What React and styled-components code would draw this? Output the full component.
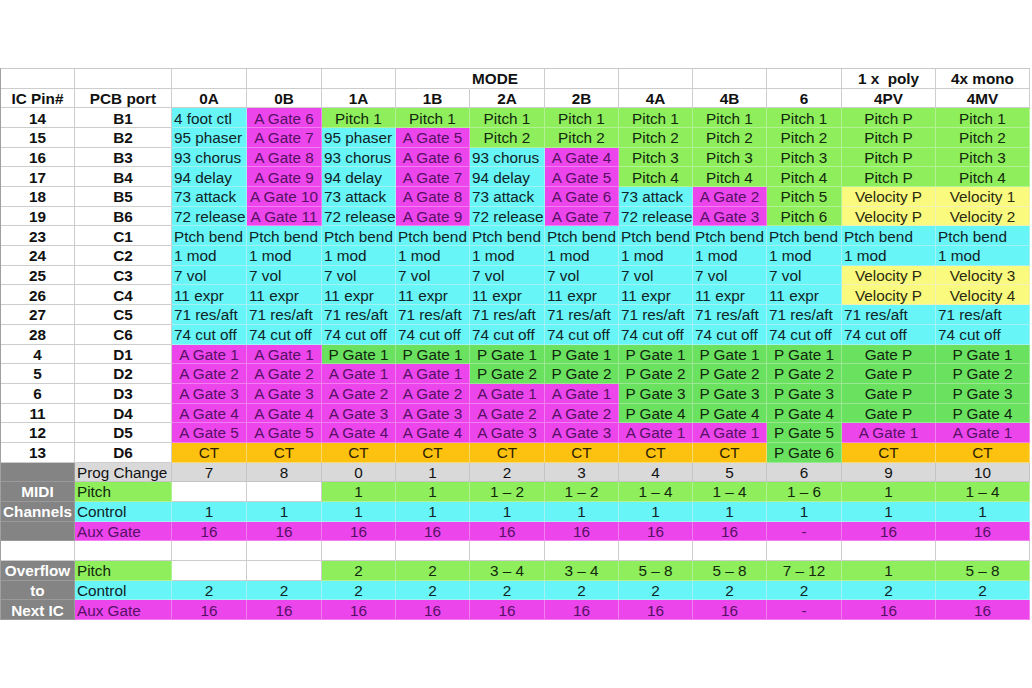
import React from 'react';
import styled, { createGlobalStyle } from 'styled-components';

const GlobalStyle = createGlobalStyle`
  html, body { margin: 0; padding: 0; background: #ffffff; }
  body { font-family: "Liberation Sans", Arial, sans-serif; }
`;

const TONES = {
  w: { bg: '#ffffff', fg: '#111111', line: '#cdcdcd' },
  c: { bg: '#68f5f7', fg: '#0e2426', line: '#a2f1f3' },
  m: { bg: '#ec45ec', fg: '#561064', line: '#f27ef2' },
  g: { bg: '#8eee5c', fg: '#12280c', line: '#b2f194' },
  p: { bg: '#6be160', fg: '#0f260c', line: '#9ae892' },
  y: { bg: '#fafa7e', fg: '#2a2a10', line: '#f3f0b4' },
  o: { bg: '#fdc10f', fg: '#2a2000', line: '#f8d870' },
  l: { bg: '#d9d9d9', fg: '#111111', line: '#c4c4c4' },
  d: { bg: '#848484', fg: '#ffffff', line: '#9a9a9a' },
};

const Page = styled.div`
  display: flex;
  align-items: center;
  justify-content: flex-start;
  height: 688px;
  width: 1032px;
`;

const Sheet = styled.div`
  display: grid;
  grid-template-columns: 74px 97px 75px 75px 74px 74px 75px 74px 74px 74px 75px 94px 94px;
  grid-template-rows: repeat(28, 1fr);
  height: 552px;
  box-sizing: border-box;
  border-top: 1px solid #c8c8c8;
  border-left: 1px solid #a0a0a0;
`;

const Cell = styled.div`
  display: flex;
  align-items: center;
  justify-content: ${(p) => (p.$align === 'left' ? 'flex-start' : 'center')};
  box-sizing: border-box;
  min-width: 0;
  padding: 1px 2px 0 2px;
  background: ${(p) => TONES[p.$tone].bg};
  color: ${(p) => TONES[p.$tone].fg};
  border-right: 1px solid ${(p) => (p.$noRight ? TONES[p.$tone].bg : TONES[p.$tone].line)};
  border-bottom: 1px solid ${(p) => TONES[p.$tone].line};
  font-size: 15.3px;
  line-height: 1;
  font-weight: ${(p) => (p.$bold ? 700 : 400)};
  white-space: nowrap;
  overflow: visible;
`;

const COLS = ['0A', '0B', '1A', '1B', '2A', '2B', '4A', '4B', '6', '4PV', '4MV'];

// pin rows: [pin, port, [[tone, text], ...]]
const rep = (n, tone, text) => Array.from({ length: n }, () => [tone, text]);

const PIN_ROWS = [
  ['14', 'B1', [['c', '4 foot ctl'], ['m', 'A Gate 6'], ...rep(7, 'g', 'Pitch 1'), ['g', 'Pitch P'], ['g', 'Pitch 1']]],
  ['15', 'B2', [['c', '95 phaser'], ['m', 'A Gate 7'], ['c', '95 phaser'], ['m', 'A Gate 5'], ...rep(5, 'g', 'Pitch 2'), ['g', 'Pitch P'], ['g', 'Pitch 2']]],
  ['16', 'B3', [['c', '93 chorus'], ['m', 'A Gate 8'], ['c', '93 chorus'], ['m', 'A Gate 6'], ['c', '93 chorus'], ['m', 'A Gate 4'], ...rep(3, 'g', 'Pitch 3'), ['g', 'Pitch P'], ['g', 'Pitch 3']]],
  ['17', 'B4', [['c', '94 delay'], ['m', 'A Gate 9'], ['c', '94 delay'], ['m', 'A Gate 7'], ['c', '94 delay'], ['m', 'A Gate 5'], ...rep(3, 'g', 'Pitch 4'), ['g', 'Pitch P'], ['g', 'Pitch 4']]],
  ['18', 'B5', [['c', '73 attack'], ['m', 'A Gate 10'], ['c', '73 attack'], ['m', 'A Gate 8'], ['c', '73 attack'], ['m', 'A Gate 6'], ['c', '73 attack'], ['m', 'A Gate 2'], ['g', 'Pitch 5'], ['y', 'Velocity P'], ['y', 'Velocity 1']]],
  ['19', 'B6', [['c', '72 release'], ['m', 'A Gate 11'], ['c', '72 release'], ['m', 'A Gate 9'], ['c', '72 release'], ['m', 'A Gate 7'], ['c', '72 release'], ['m', 'A Gate 3'], ['g', 'Pitch 6'], ['y', 'Velocity P'], ['y', 'Velocity 2']]],
  ['23', 'C1', rep(11, 'c', 'Ptch bend')],
  ['24', 'C2', rep(11, 'c', '1 mod')],
  ['25', 'C3', [...rep(9, 'c', '7 vol'), ['y', 'Velocity P'], ['y', 'Velocity 3']]],
  ['26', 'C4', [...rep(9, 'c', '11 expr'), ['y', 'Velocity P'], ['y', 'Velocity 4']]],
  ['27', 'C5', rep(11, 'c', '71 res/aft')],
  ['28', 'C6', rep(11, 'c', '74 cut off')],
  ['4', 'D1', [['m', 'A Gate 1'], ['m', 'A Gate 1'], ...rep(7, 'p', 'P Gate 1'), ['p', 'Gate P'], ['p', 'P Gate 1']]],
  ['5', 'D2', [['m', 'A Gate 2'], ['m', 'A Gate 2'], ['m', 'A Gate 1'], ['m', 'A Gate 1'], ...rep(5, 'p', 'P Gate 2'), ['p', 'Gate P'], ['p', 'P Gate 2']]],
  ['6', 'D3', [['m', 'A Gate 3'], ['m', 'A Gate 3'], ['m', 'A Gate 2'], ['m', 'A Gate 2'], ['m', 'A Gate 1'], ['m', 'A Gate 1'], ...rep(3, 'p', 'P Gate 3'), ['p', 'Gate P'], ['p', 'P Gate 3']]],
  ['11', 'D4', [['m', 'A Gate 4'], ['m', 'A Gate 4'], ['m', 'A Gate 3'], ['m', 'A Gate 3'], ['m', 'A Gate 2'], ['m', 'A Gate 2'], ...rep(3, 'p', 'P Gate 4'), ['p', 'Gate P'], ['p', 'P Gate 4']]],
  ['12', 'D5', [['m', 'A Gate 5'], ['m', 'A Gate 5'], ['m', 'A Gate 4'], ['m', 'A Gate 4'], ['m', 'A Gate 3'], ['m', 'A Gate 3'], ['m', 'A Gate 1'], ['m', 'A Gate 1'], ['p', 'P Gate 5'], ['m', 'A Gate 1'], ['m', 'A Gate 1']]],
  ['13', 'D6', [...rep(8, 'o', 'CT'), ['p', 'P Gate 6'], ['o', 'CT'], ['o', 'CT']]],
];

// channel rows: [side label (null = white), label tone, label, values]
const vals = (tone, list) => list.map((v) => [v === '' ? 'w' : tone, v]);

const CHANNEL_ROWS = [
  ['d', '', 'l', 'Prog Change', vals('l', ['7', '8', '0', '1', '2', '3', '4', '5', '6', '9', '10'])],
  ['d', 'MIDI', 'g', 'Pitch', vals('g', ['', '', '1', '1', '1 – 2', '1 – 2', '1 – 4', '1 – 4', '1 – 6', '1', '1 – 4'])],
  ['d', 'Channels', 'c', 'Control', vals('c', Array(11).fill('1'))],
  ['d', '', 'm', 'Aux Gate', vals('m', ['16', '16', '16', '16', '16', '16', '16', '16', '-', '16', '16'])],
  ['w', '', 'w', '', vals('w', Array(11).fill(''))],
  ['d', 'Overflow', 'g', 'Pitch', vals('g', ['', '', '2', '2', '3 – 4', '3 – 4', '5 – 8', '5 – 8', '7 – 12', '1', '5 – 8'])],
  ['d', 'to', 'c', 'Control', vals('c', Array(11).fill('2'))],
  ['d', 'Next IC', 'm', 'Aux Gate', vals('m', ['16', '16', '16', '16', '16', '16', '16', '16', '-', '16', '16'])],
];

const TOP = ['', '', '', '', '', '', 'MODE', '', '', '', '', '1 x  poly', '4x mono'];

export default function App() {
  const cells = [];
  TOP.forEach((t, i) => {
    cells.push(
      <Cell
        key={`t${i}`}
        $tone="w"
        $bold
        $align={t === 'MODE' ? 'left' : 'center'}
        $noRight={i === 5}
      >
        {t.replace(/  /g, '\u00a0 ')}
      </Cell>
    );
  });
  ['IC Pin#', 'PCB port', ...COLS].forEach((t, i) => {
    cells.push(
      <Cell key={`h${i}`} $tone="w" $bold>
        {t}
      </Cell>
    );
  });
  PIN_ROWS.forEach(([pin, port, row], r) => {
    cells.push(
      <Cell key={`p${r}a`} $tone="w" $bold>
        {pin}
      </Cell>
    );
    cells.push(
      <Cell key={`p${r}b`} $tone="w" $bold>
        {port}
      </Cell>
    );
    row.forEach(([tone, text], c) => {
      cells.push(
        <Cell key={`p${r}-${c}`} $tone={tone} $align={tone === 'c' ? 'left' : 'center'}>
          {text}
        </Cell>
      );
    });
  });
  CHANNEL_ROWS.forEach(([sideTone, side, labTone, label, row], r) => {
    cells.push(
      <Cell key={`c${r}a`} $tone={sideTone} $bold>
        {side}
      </Cell>
    );
    cells.push(
      <Cell key={`c${r}b`} $tone={labTone} $align="left">
        {label}
      </Cell>
    );
    row.forEach(([tone, text], c) => {
      cells.push(
        <Cell key={`c${r}-${c}`} $tone={tone}>
          {text}
        </Cell>
      );
    });
  });

  return (
    <>
      <GlobalStyle />
      <Page>
        <Sheet>{cells}</Sheet>
      </Page>
    </>
  );
}
